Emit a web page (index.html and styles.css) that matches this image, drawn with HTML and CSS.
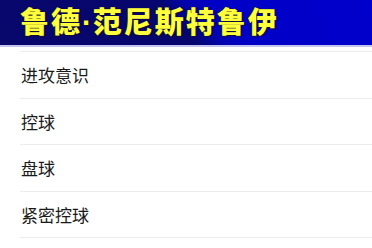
FILE: index.html
```html
<!DOCTYPE html>
<html lang="zh">
<head>
<meta charset="utf-8">
<title>鲁德·范尼斯特鲁伊</title>
<link rel="stylesheet" href="styles.css">
</head>
<body>
<header class="banner">
  <h1 class="banner-title">鲁德<span class="dot">·</span>范尼斯特鲁伊</h1>
</header>
<ul class="skill-list">
  <li class="skill">进攻意识</li>
  <li class="skill">控球</li>
  <li class="skill">盘球</li>
  <li class="skill">紧密控球</li>
</ul>
</body>
</html>
```
FILE: styles.css
```css
html, body {
  margin: 0;
  padding: 0;
  background: #ffffff;
}
body {
  font-family: "Noto Sans CJK SC", "Noto Sans", sans-serif;
  width: 372px;
  overflow: hidden;
}
.banner {
  height: 45px;
  background: linear-gradient(48deg, #07076c 0%, #06066e 48%, #0303b4 55%, #0000c6 61%, #0000cc 100%);
  border-bottom: 2px solid #c4c4ee;
  display: flex;
  align-items: center;
  padding-left: 20px;
  box-sizing: content-box;
}
.banner-title {
  margin: 0 0 1px 0;
  font-size: 29px;
  font-weight: 900;
  letter-spacing: 2px;
  color: #ffff3c;
  line-height: 1;
  text-shadow: 0 0 1px #1a1a30, 1px 1px 1px #101030, -1px 0 1px #101040;
}
.dot {
  font-family: "Liberation Sans", sans-serif;
  font-weight: 700;
  letter-spacing: 1px;
}
.skill-list {
  list-style: none;
  margin: 4px 0 0 20px;
  padding: 0;
  border-top: 1px solid #ececec;
}
.skill {
  height: 45.5px;
  display: flex;
  align-items: center;
  padding-left: 1px;
  font-size: 17px;
  color: #1a1a1a;
  border-bottom: 1px solid #ececec;
}
```
